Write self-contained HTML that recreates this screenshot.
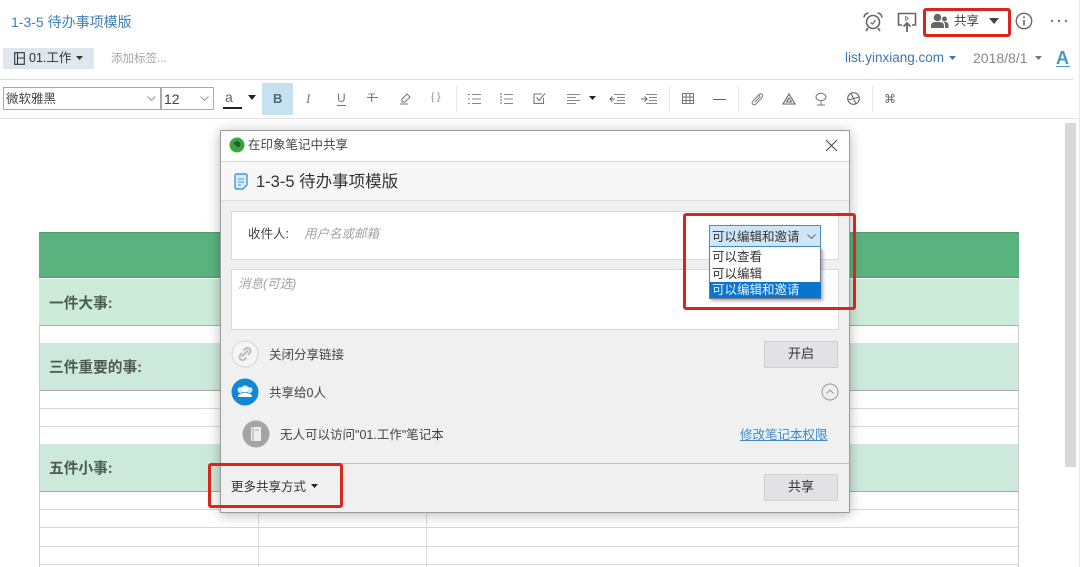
<!DOCTYPE html>
<html lang="zh">
<head>
<meta charset="utf-8">
<title>在印象笔记中共享</title>
<style>
html,body{margin:0;padding:0;background:#fff}
#p{position:relative;width:1080px;height:567px;overflow:hidden;background:#fff;font-family:"Liberation Sans","Noto Sans CJK SC",sans-serif;color:#444;filter:blur(.35px)}
#p div,#p svg,#p span{position:absolute}
.t{white-space:nowrap;line-height:16px;height:16px}
.ic{fill:none;stroke:#666;stroke-width:1}
.r{border:3px solid #d8261c;border-radius:3px;box-sizing:border-box;z-index:20}
.g{background:#cdebd9;left:39px;width:980px}
.l{left:39px;width:980px;height:1px;background:#d8d8d8}
.v{width:1px;background:#ddd}
.sep{width:1px;top:86px;height:26px;background:#e6e6e6}
.btn{background:#e2e1e3;border:1px solid #cfcfcf;box-sizing:border-box;text-align:center;font-size:13px;color:#333;line-height:24px;left:764px;width:74px;height:27px}
</style>
</head>
<body>
<div id="p">
<!-- top header -->
<div class="t" style="left:11px;top:14px;font-size:14px;color:#3f7fb5">1-3-5 待办事项模版</div>

<svg style="left:862px;top:11px" width="22" height="22" viewBox="0 0 22 22" class="ic"><circle cx="11" cy="11" r="6.500" stroke="#666" stroke-width="1.600"/><path d="M8.500 11.500l2 1.500 3-4" stroke="#666" stroke-width="1.200"/><path d="M2 6.500Q2.500 2.500 6.500 2M20 6.500Q19.500 2.500 15.500 2M6 17l-2 3M16 17l2 3" stroke="#666" stroke-width="1.600"/></svg>
<svg style="left:896px;top:11px" width="22" height="22" viewBox="0 0 22 22"><path d="M6 14H2.500V2.500H19.500V14H16" fill="none" stroke="#666" stroke-width="1.600"/><path d="M11 21V12M7.500 15.500l3.500-3.500 3.500 3.500" fill="none" stroke="#666" stroke-width="1.800"/><path d="M9.500 5.500l3 2-3 2z" fill="none" stroke="#777" stroke-width=".8"/></svg>
<svg style="left:931px;top:13px" width="18" height="16" viewBox="0 0 18 16"><circle cx="6.500" cy="4.500" r="3.800" fill="#666"/><path d="M0 15v-2.500Q0 9.500 4 9h5q4 .5 4 3.500V15z" fill="#666"/><circle cx="13.500" cy="6" r="2.500" fill="#666"/><path d="M14 15v-3q0-2-1.500-3H15q2.500.5 2.500 3v3z" fill="#666"/></svg>
<div class="t" style="left:954px;top:13px;font-size:12.500px;color:#444">共享</div>
<svg style="left:989px;top:18px" width="10" height="6"><path d="M0 0h10L5 6z" fill="#444"/></svg>
<div class="r" style="left:923px;top:8px;width:88px;height:29px"></div>
<svg style="left:1015px;top:12px" width="18" height="18" viewBox="0 0 18 18"><circle cx="9" cy="9" r="7.700" fill="none" stroke="#666" stroke-width="1.400"/><path d="M9 8v5.500" stroke="#666" stroke-width="1.600"/><circle cx="9" cy="5.200" r="1" fill="#666"/></svg>
<svg style="left:1050px;top:19px" width="18" height="4"><circle cx="2" cy="2" r="1.200" fill="#777"/><circle cx="9" cy="2" r="1.200" fill="#777"/><circle cx="16" cy="2" r="1.200" fill="#777"/></svg>

<!-- tag row -->
<div style="left:3px;top:48px;width:91px;height:21px;background:#dde7ed"></div>
<svg style="left:14px;top:52px" width="11" height="13" viewBox="0 0 11 13"><path d="M.7.700h9.600v11.600H.7zM3.500.7v11.600M3.500 6h6.800" fill="none" stroke="#333" stroke-width="1.100"/></svg>
<div class="t" style="left:29px;top:50px;font-size:12.500px;color:#333">01.工作</div>
<svg style="left:76px;top:56px" width="7" height="4"><path d="M0 0h7L3.500 4z" fill="#333"/></svg>
<div class="t" style="left:111px;top:51px;font-size:11.500px;color:#a5a5a5">添加标签...</div>

<div class="t" style="left:845px;top:50px;font-size:13.500px;color:#3b77b3">list.yinxiang.com</div>
<svg style="left:949px;top:56px" width="7" height="4"><path d="M0 0h7L3.500 4z" fill="#3b77b3"/></svg>
<div class="t" style="left:973px;top:50px;font-size:14px;color:#888">2018/8/1</div>
<svg style="left:1035px;top:56px" width="7" height="4"><path d="M0 0h7L3.500 4z" fill="#777"/></svg>
<div class="t" style="left:1056px;top:49px;font-size:18px;line-height:19px;height:19px;font-weight:bold;color:#4a97cf">A</div>
<div style="left:1056px;top:66px;width:14px;height:1px;background:#4a97cf"></div>

<div style="left:0;top:79px;width:1073px;height:1px;background:#dcdcdc"></div>

<!-- toolbar -->
<div style="left:3px;top:87px;width:158px;height:23px;border:1px solid #aaa;box-sizing:border-box"></div>
<div class="t" style="left:6px;top:91px;font-size:12.500px;color:#444">微软雅黑</div>
<svg style="left:147px;top:96px" width="9" height="5" class="ic"><path d="M.5.500L4.500 4.500 8.500.5" stroke="#999"/></svg>
<div style="left:161px;top:87px;width:53px;height:23px;border:1px solid #aaa;box-sizing:border-box"></div>
<div class="t" style="left:164px;top:91px;font-size:14px;color:#444">12</div>
<svg style="left:200px;top:96px" width="9" height="5" class="ic"><path d="M.5.500L4.500 4.500 8.500.5" stroke="#999"/></svg>

<div class="t" style="left:225px;top:89px;font-size:14px;color:#666">a</div>
<div style="left:223px;top:107px;width:19px;height:2px;background:#222"></div>
<svg style="left:248px;top:95px" width="8" height="5"><path d="M0 0h8L4 5z" fill="#222"/></svg>
<div style="left:262px;top:83px;width:31px;height:32px;background:#c6e1f0"></div>
<div class="t" style="left:273px;top:91px;font-size:13px;font-weight:bold;color:#4a6a86">B</div>
<div class="t" style="left:306px;top:91px;font-size:13px;font-style:italic;font-family:'Liberation Serif',serif;color:#777">I</div>
<div class="t" style="left:337px;top:90px;font-size:12px;color:#777">U</div>
<div style="left:337px;top:105px;width:9px;height:1px;background:#777"></div>
<div class="t" style="left:368px;top:90px;font-size:12px;color:#777">T</div>
<div style="left:367px;top:97px;width:11px;height:1px;background:#777"></div>
<svg style="left:399px;top:92px" width="14" height="13" viewBox="0 0 14 13"><path d="M3 7l5-5 3 3-5 5H3zM1 12h8" fill="none" stroke="#777"/></svg>
<div class="t" style="left:431px;top:90px;font-size:10px;color:#888">{ }</div>
<div class="sep" style="left:456px"></div>

<svg style="left:468px;top:93px" width="13" height="12" viewBox="0 0 13 12"><path d="M4 1.500h9M4 6h9M4 10.500h9" stroke="#888"/><path d="M0 1.500h2M0 6h2M0 10.500h2" stroke="#888"/></svg>
<svg style="left:500px;top:93px" width="13" height="12" viewBox="0 0 13 12"><path d="M4 1.500h9M4 6h9M4 10.500h9" stroke="#888"/><path d="M1 0v12" stroke="#999" stroke-width="1.500" stroke-dasharray="2 1"/></svg>
<svg style="left:533px;top:92px" width="13" height="13" viewBox="0 0 13 13"><path d="M10.500 6v5.500H1V2h8" fill="none" stroke="#777" stroke-width="1.100"/><path d="M3.500 5.500l2.500 3L12 1.500" fill="none" stroke="#777" stroke-width="1.100"/></svg>
<svg style="left:567px;top:93px" width="13" height="12" viewBox="0 0 13 12"><path d="M0 1.500h13M0 4.500h9M0 7.500h13M0 10.500h9" stroke="#888"/></svg>
<svg style="left:589px;top:96px" width="7" height="4"><path d="M0 0h7L3.500 4z" fill="#222"/></svg>
<svg style="left:609px;top:93px" width="16" height="12" viewBox="0 0 16 12"><path d="M5 1.500h11M8 4.500h8M8 7.500h8M5 10.500h11" stroke="#888"/><path d="M6 6H1M3.500 3.500L1 6l2.500 2.500" fill="none" stroke="#666"/></svg>
<svg style="left:641px;top:93px" width="16" height="12" viewBox="0 0 16 12"><path d="M5 1.500h11M8 4.500h8M8 7.500h8M5 10.500h11" stroke="#888"/><path d="M0 6h6M3.500 3.500L6 6 3.500 8.500" fill="none" stroke="#666"/></svg>
<div class="sep" style="left:669px"></div>
<svg style="left:682px;top:93px" width="12" height="11" viewBox="0 0 12 11"><path d="M.5.500h11v10H.5zM.5 4h11M.5 7.500h11M4 .5v10M8 .5v10" fill="none" stroke="#777"/></svg>
<div style="left:713px;top:99px;width:13px;height:1px;background:#666"></div>
<div class="sep" style="left:738px"></div>
<svg style="left:751px;top:92px" width="13" height="14" viewBox="0 0 13 14"><path d="M2.500 8.500L8 2.500q2-1.500 3.300 0 1 1.500-.5 3.200L5 12q-2 1.500-3.300.3-1.200-1.300.3-3l5-5.300q1-.8 1.700-.2.700.8-.2 1.700L4 10" fill="none" stroke="#888" stroke-width="1.100"/></svg>
<svg style="left:782px;top:93px" width="14" height="12" viewBox="0 0 14 12"><path d="M7 1l6 10H1zM7 5l2.500 4h-5z" fill="none" stroke="#666" stroke-width="1.100"/></svg>
<svg style="left:815px;top:92px" width="12" height="14" viewBox="0 0 12 14"><ellipse cx="6" cy="5" rx="5" ry="3.600" fill="none" stroke="#777"/><path d="M6 8.500V13M2 13h8" fill="none" stroke="#777"/></svg>
<svg style="left:847px;top:92px" width="13" height="13" viewBox="0 0 13 13"><circle cx="6.500" cy="6.500" r="5.800" fill="none" stroke="#666" stroke-width="1.100"/><path d="M6.500 6.500L4 1.500M6.500 6.500L12 5M6.500 6.500L9 12M6.500 6.500L1 8" stroke="#666"/></svg>
<div class="sep" style="left:872px"></div>
<div class="t" style="left:884px;top:91px;font-size:12px;color:#666;font-family:'DejaVu Sans',sans-serif">⌘</div>

<div style="left:0;top:118px;width:1080px;height:1px;background:#e2e2e2"></div>
<div style="left:1065px;top:123px;width:11px;height:344px;background:#d8d7d9"></div>
<div style="left:1079px;top:0;width:1px;height:567px;background:#e8e8e8"></div>

<!-- table -->
<div style="left:39px;top:232px;width:980px;height:46px;background:#5ab27e;border-top:1px solid #4e9c6e;border-bottom:1px solid #4e9c6e;box-sizing:border-box"></div>
<div class="g" style="top:279px;height:46px"></div>
<div class="l" style="top:325px;background:#aaa"></div>
<div class="g" style="top:343px;height:47px;background:#cde9db"></div>
<div class="l" style="top:390px;background:#aaa"></div>
<div class="l" style="top:408px"></div>
<div class="l" style="top:426px"></div>
<div class="g" style="top:444px;height:47px;background:#cde9db"></div>
<div class="l" style="top:491px;background:#aaa"></div>
<div class="l" style="top:509px"></div>
<div class="l" style="top:527px"></div>
<div class="l" style="top:546px"></div>
<div class="l" style="top:564px"></div>
<div style="left:39px;top:325px;width:1px;height:242px;background:#ccc"></div>
<div style="left:1018px;top:325px;width:1px;height:242px;background:#ccc"></div>
<div class="v" style="left:258px;top:512px;height:55px"></div>
<div class="v" style="left:426px;top:512px;height:55px"></div>
<div class="t" style="left:49px;top:296px;font-size:14.700px;font-weight:bold;color:#4c5a52">一件大事:</div>
<div class="t" style="left:49px;top:360px;font-size:14.700px;font-weight:bold;color:#4c5a52">三件重要的事:</div>
<div class="t" style="left:49px;top:461px;font-size:14.700px;font-weight:bold;color:#4c5a52">五件小事:</div>

<!-- dialog -->
<div style="left:220px;top:130px;width:630px;height:383px;background:#f1f0f1;border:1px solid #9a9a9a;box-sizing:border-box;box-shadow:0 2px 12px rgba(0,0,0,.28);z-index:5">
  <div style="left:0;top:0;width:628px;height:30px;background:#fff;border-bottom:1px solid #d6d6d6"></div>
  <div style="left:0;top:31px;width:628px;height:38px;background:#f7f7f8;border-bottom:1px solid #e2e2e2"></div>
  <svg style="left:8px;top:6px" width="16" height="16" viewBox="0 0 16 16"><circle cx="8" cy="8" r="7.500" fill="#38a83e"/><path d="M4.500 7q1-3 4-2.700 3 .3 3 3.200l-1 2.500H8L7 8.500z" fill="#2d5438"/></svg>
  <div class="t" style="left:27px;top:6px;font-size:12.500px;color:#444">在印象笔记中共享</div>
  <svg style="left:604px;top:8px" width="13" height="13" viewBox="0 0 13 13"><path d="M1 1l11 11M12 1L1 12" stroke="#444" stroke-width="1"/></svg>
  <svg style="left:13px;top:42px" width="14" height="17" viewBox="0 0 14 17"><path d="M2.500 1h9Q13 1 13 2.500V12l-4 4H2.500Q1 16 1 14.500v-12Q1 1 2.500 1z" fill="#d7ecfa" stroke="#4a98d3" stroke-width="1.400"/><path d="M4 6h6M4 9h6M4 12h3" stroke="#4a98d3"/></svg>
  <div class="t" style="left:35px;top:41px;font-size:16.500px;line-height:20px;height:20px;color:#333">1-3-5 待办事项模版</div>

  <div style="left:10px;top:80px;width:608px;height:49px;background:#fff;border:1px solid #dadada;box-sizing:border-box"></div>
  <div class="t" style="left:27px;top:95px;font-size:12.500px;color:#444">收件人:</div>
  <div class="t" style="left:83px;top:95px;font-size:12.500px;font-style:italic;color:#a2a2a2">用户名或邮箱</div>
  <div style="left:10px;top:138px;width:608px;height:61px;background:#fff;border:1px solid #dadada;box-sizing:border-box"></div>
  <div class="t" style="left:17px;top:145px;font-size:12.500px;font-style:italic;color:#a2a2a2">消息(可选)</div>

  <svg style="left:10px;top:209px" width="28" height="28" viewBox="0 0 28 28"><circle cx="14" cy="14" r="13" fill="#f5f5f5" stroke="#d5d5d5"/><path d="M11 16.500l6-6M12.500 10.500l1.500-1.500q2.500-2 4.500-.3 2 2 0 4.500L17 15M15.500 17.500L14 19q-2.500 2-4.500.3-2-2 0-4.500L11 13" fill="none" stroke="#bbb" stroke-width="2"/></svg>
  <div class="t" style="left:48px;top:216px;font-size:12.500px;color:#444">关闭分享链接</div>
  <div class="btn" style="left:543px;top:210px">开启</div>

  <svg style="left:10px;top:247px" width="28" height="28" viewBox="0 0 28 28"><circle cx="14" cy="14" r="13.500" fill="#0f88d3"/><circle cx="9.500" cy="12" r="3" fill="#cfe6f6"/><circle cx="18.500" cy="12" r="3" fill="#cfe6f6"/><circle cx="14" cy="11" r="3.500" fill="#fff"/><path d="M7 19q0-4 7-4t7 4z" fill="#fff"/></svg>
  <div class="t" style="left:48px;top:254px;font-size:12.500px;color:#444">共享给0人</div>
  <svg style="left:600px;top:252px" width="18" height="18" viewBox="0 0 18 18"><circle cx="9" cy="9" r="8" fill="none" stroke="#999"/><path d="M5.500 10.500L9 7l3.500 3.500" fill="none" stroke="#999"/></svg>

  <svg style="left:21px;top:289px" width="28" height="28" viewBox="0 0 28 28"><circle cx="14" cy="14" r="13.500" fill="#a5a4a5"/><path d="M9 7h10v14H9z" fill="#eee"/><path d="M11 7v14" stroke="#a5a4a5"/><path d="M13 10h4" stroke="#a5a4a5"/></svg>
  <div class="t" style="left:59px;top:296px;font-size:12.500px;color:#444">无人可以访问"01.工作"笔记本</div>
  <div class="t" style="left:519px;top:296px;font-size:12.500px;color:#4a86c0;text-decoration:underline;background:#e8f2fa">修改笔记本权限</div>

  <div style="left:0;top:332px;width:628px;height:1px;background:#c4c4c4"></div>
  <div class="t" style="left:10px;top:348px;font-size:12.500px;color:#333">更多共享方式</div>
  <svg style="left:90px;top:353px" width="7" height="4"><path d="M0 0h7L3.500 4z" fill="#222"/></svg>
  <div class="btn" style="left:543px;top:343px">共享</div>
</div>

<!-- permission dropdown -->
<div style="left:709px;top:225px;width:112px;height:22px;background:#cfe5f8;border:1px solid #4a8cc4;box-sizing:border-box;z-index:8"></div>
<div class="t" style="left:712px;top:229px;font-size:12.500px;color:#333;z-index:9">可以编辑和邀请</div>
<svg style="left:807px;top:234px;z-index:9" width="9" height="5" class="ic"><path d="M.5.500L4.500 4.500 8.500.5" stroke="#667"/></svg>
<div style="left:709px;top:247px;width:112px;height:52px;background:#fff;border:1px solid #7a7a7a;border-top:none;box-sizing:border-box;box-shadow:2px 2px 3px rgba(70,70,110,.45);z-index:8"></div>
<div style="left:710px;top:282px;width:111px;height:16px;background:#0b74cc;z-index:9"></div>
<div class="t" style="left:712px;top:249px;font-size:12.500px;color:#333;z-index:10">可以查看</div>
<div class="t" style="left:712px;top:266px;font-size:12.500px;color:#333;z-index:10">可以编辑</div>
<div class="t" style="left:712px;top:282px;font-size:12.500px;color:#e8f2fb;z-index:10">可以编辑和邀请</div>

<!-- red highlights -->
<div class="r" style="left:683px;top:213px;width:173px;height:97px"></div>
<div class="r" style="left:208px;top:463px;width:135px;height:45px"></div>
</div>
</body>
</html>
